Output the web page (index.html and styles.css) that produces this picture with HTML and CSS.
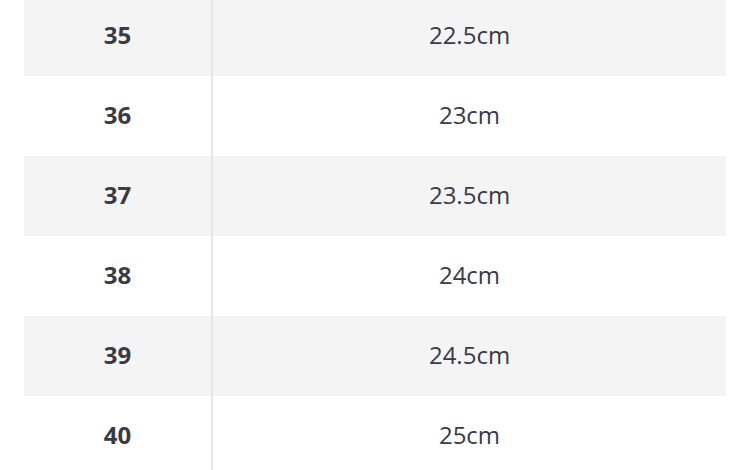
FILE: index.html
```html
<!DOCTYPE html>
<html>
<head>
<meta charset="utf-8">
<link rel="stylesheet" href="styles.css">
</head>
<body>
<div class="wrap">
  <table class="sizes">
    <tr class="stripe"><td class="eu">35</td><td class="cm">22.5cm</td></tr>
    <tr><td class="eu">36</td><td class="cm">23cm</td></tr>
    <tr class="stripe"><td class="eu">37</td><td class="cm">23.5cm</td></tr>
    <tr><td class="eu">38</td><td class="cm">24cm</td></tr>
    <tr class="stripe"><td class="eu">39</td><td class="cm">24.5cm</td></tr>
    <tr><td class="eu">40</td><td class="cm">25cm</td></tr>
  </table>
</div>
</body>
</html>
```
FILE: styles.css
```css
html, body {
  margin: 0;
  padding: 0;
  background: #ffffff;
  overflow: hidden;
}
.wrap {
  padding: 0 24px;
  margin-top: -4px;
}
.sizes {
  width: 702px;
  border-collapse: collapse;
  font-family: "Open Sans", sans-serif;
  font-size: 24px;
  color: #3a3a44;
}
.sizes tr {
  height: 80px;
}
.sizes td {
  padding: 0 0 4px 0;
  text-align: center;
  vertical-align: middle;
}
.stripe td {
  background: #f4f4f4;
}
.eu {
  width: 187px;
  font-weight: 700;
  border-right: 2px solid #e6e6e6;
}
.cm {
  font-weight: 400;
}
```
